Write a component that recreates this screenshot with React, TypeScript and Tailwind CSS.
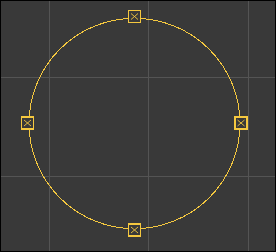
const handles = [
  { x: 134.5, y: 16.5 },
  { x: 27.5, y: 123 },
  { x: 241, y: 123 },
  { x: 134.5, y: 230 },
];

export default function App() {
  return (
    <div className="w-[276px] h-[252px] bg-[#393939] border border-black overflow-hidden">
      <svg width="274" height="250" viewBox="1 1 274 250" className="block">
        {/* grid */}
        {[49.5, 148.5, 248.5].map((x) => (
          <line key={x} x1={x} y1={0} x2={x} y2={252} stroke="#545454" strokeWidth={1} />
        ))}
        {[77.5, 176.5].map((y) => (
          <line key={y} x1={0} y1={y} x2={276} y2={y} stroke="#545454" strokeWidth={1} />
        ))}
        {/* circle */}
        <ellipse
          cx={134.5}
          cy={123.5}
          rx={105.5}
          ry={105.2}
          fill="none"
          stroke="#f5c83f"
          strokeWidth={1}
          shapeRendering="crispEdges"
        />
        {/* handles */}
        {handles.map((h, i) => (
          <g key={i} transform={`translate(${h.x} ${h.y})`}>
            <rect x={-6} y={-6} width={12} height={12} fill="#393939" stroke="#f5c83f" strokeWidth={1.4} shapeRendering="crispEdges" />
            <path d="M-3.5 -3 L3.5 3 M3.5 -3 L-3.5 3" stroke="#f5c83f" strokeWidth={0.9} fill="none" />
          </g>
        ))}
      </svg>
    </div>
  );
}
